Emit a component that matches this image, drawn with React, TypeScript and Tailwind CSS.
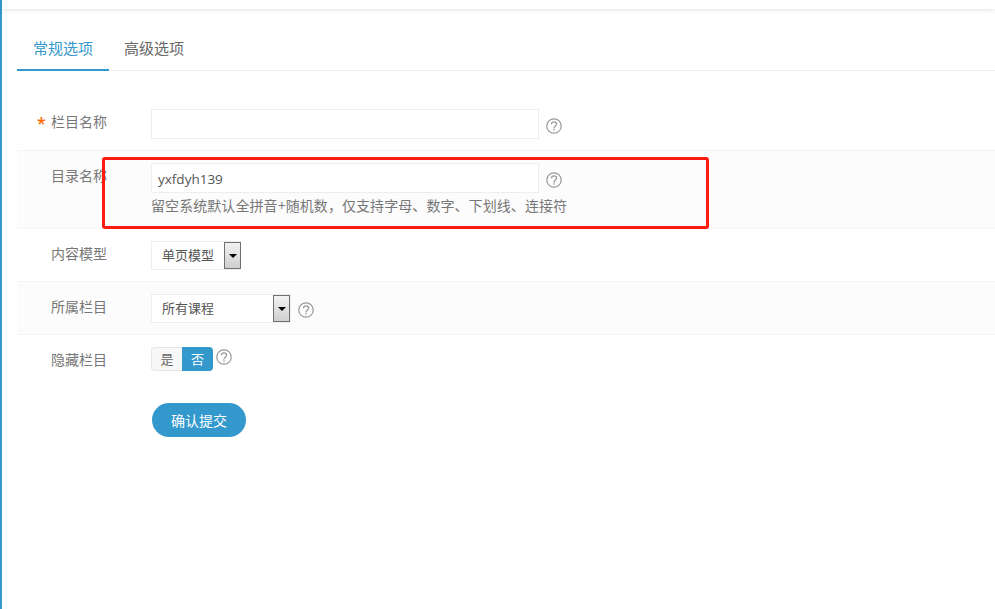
import React from 'react';

const font = '[font-family:"Open_Sans","Noto_Sans_CJK_SC",sans-serif]';

const Help = ({ className = '' }: { className?: string }) => (
  <svg width="16" height="16" viewBox="0 0 16 16" fill="none" stroke="#999" className={className}>
    <circle cx="8" cy="8" r="7.2" strokeWidth="1.2" />
    <path d="M5.4 6.2C5.5 4.7 6.6 3.9 8 3.9c1.5 0 2.6.9 2.6 2.2 0 1.1-.7 1.6-1.4 2.1-.7.5-1.2.9-1.2 1.9v.4" strokeWidth="1.3" />
    <path d="M8 11.3v1.3" strokeWidth="1.4" />
  </svg>
);

const Row = ({
  label,
  required,
  shaded,
  labelTop = 'pt-0',
  className = '',
  children,
}: {
  label: string;
  required?: boolean;
  shaded?: boolean;
  labelTop?: string;
  className?: string;
  children: React.ReactNode;
}) => (
  <div className={`flex border-b border-[#f5f5f5] ${shaded ? 'bg-[#fcfcfc]' : 'bg-white'} ${className}`}>
    <div className={`relative w-[134px] shrink-0 pl-[34px] text-[14px] leading-[20px] text-[#777] ${labelTop}`}>
      {required && <span className="absolute left-[20px] top-[1px] text-[16px] font-semibold text-[#f60]">*</span>}
      {label}
    </div>
    <div className="flex-1">{children}</div>
  </div>
);

const SelectBox = ({ text, width, arrowClass = '' }: { text: string; width: string; arrowClass?: string }) => (
  <div className={`flex h-[29px] items-center justify-between border border-[#eee] bg-white pl-[10px] text-[13px] text-[#555] ${width}`}>
    <span>{text}</span>
    <span className={`flex h-[27px] w-[17px] items-center justify-center border border-[#707070] bg-gradient-to-b from-[#f2f2f2] to-[#cfcfcf] ${arrowClass}`}>
      <span className="h-0 w-0 border-x-[4px] border-t-[4px] border-x-transparent border-t-black" />
    </span>
  </div>
);

const App: React.FC = () => {
  return (
    <div className={`relative flex h-[609px] w-[995px] overflow-hidden bg-white ${font}`}>
      <div className="w-[2px] shrink-0 bg-[#3399cc]" />
      <div className="flex-1">
        <div className="h-[9px] bg-white shadow-[0_1px_4px_rgba(0,0,0,0.12)]" />

        <div className="ml-[15px]">
          <div className="mt-[21px] flex h-[41px] border-b border-[#eee] text-[15px]">
            <div className="h-[41px] w-[92px] border-b-2 border-[#3399cc] pt-[8px] text-center leading-[20px] text-[#3399cc]">常规选项</div>
            <div className="w-[90px] pt-[8px] text-center leading-[20px] text-[#666]">高级选项</div>
          </div>

          <div className="mt-[25px]">
            <Row label="栏目名称" required className="h-[55px] pt-[16px]">
              <div className="-mt-[3px] flex items-center gap-[7px]">
                <div className="h-[30px] w-[388px] border border-[#eee] bg-white" />
                <Help className="mt-[3px]" />
              </div>
            </Row>

            <Row label="目录名称" shaded className="h-[78px] pt-[12px]" labelTop="pt-[3px]">
              <div className="flex items-center gap-[7px]">
                <input
                  readOnly
                  value="yxfdyh139"
                  className="h-[30px] w-[388px] border border-[#eee] bg-white px-[6px] pt-[2px] text-[13.5px] text-[#555] outline-none"
                />
                <Help className="mt-[3px]" />
              </div>
              <div className="mt-[3px] text-[14px] leading-[20px] tracking-[0.07px] text-[#777]">留空系统默认全拼音+随机数，仅支持字母、数字、下划线、连接符</div>
            </Row>

            <Row label="内容模型" className="h-[53px] pt-[12px]" labelTop="pt-[3px]">
              <SelectBox text="单页模型" width="w-[90px]" arrowClass="-mr-px" />
            </Row>

            <Row label="所属栏目" shaded className="h-[53px] pt-[12px]" labelTop="pt-[3px]">
              <div className="flex items-center gap-[7px]">
                <SelectBox text="所有课程" width="w-[140px]" />
                <Help className="mt-[2px]" />
              </div>
            </Row>

            <div className="flex pt-[12px]">
              <div className="w-[134px] shrink-0 pl-[34px] pt-[3px] text-[14px] leading-[20px] text-[#777]">隐藏栏目</div>
              <div className="flex-1">
                <div className="flex items-start gap-[3px]">
                  <div className="flex h-[24px] w-[62px] text-[13px] leading-[22px]">
                    <span className="w-[31px] rounded-l-[4px] border-y border-l border-[#e6e6e6] bg-[#f7f7f7] text-center text-[#666]">是</span>
                    <span className="w-[31px] rounded-r-[4px] bg-[#3399cc] text-center leading-[24px] text-white">否</span>
                  </div>
                  <Help className="mt-[2px]" />
                </div>
                <button className="ml-px mt-[32px] h-[34px] w-[94px] rounded-full bg-[#3399cc] text-[14px] text-white">确认提交</button>
              </div>
            </div>
          </div>
        </div>
      </div>

      {/* annotation drawn over the screenshot */}
      <div className="absolute left-[102px] top-[157px] h-[72px] w-[607px] rounded-[3px] border-[3px] border-[#ff1a10]" />
    </div>
  );
};

export default App;
